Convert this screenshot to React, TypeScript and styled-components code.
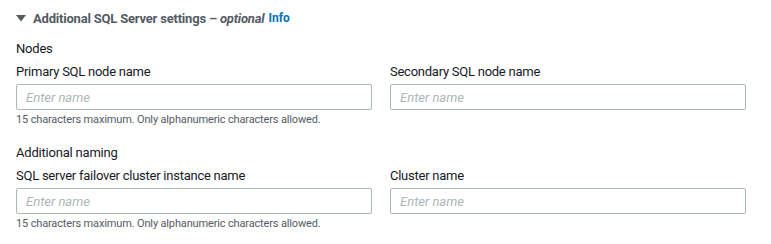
import React from 'react';
import styled, { createGlobalStyle } from 'styled-components';

const GlobalStyle = createGlobalStyle`
  body {
    margin: 0;
    background: #ffffff;
    font-family: Roboto, 'Liberation Sans', Arial, sans-serif;
    color: #16191f;
  }
`;

type Field = { label: string; help?: string };

const groups: { title: string; fields: Field[] }[] = [
  {
    title: 'Nodes',
    fields: [
      {
        label: 'Primary SQL node name',
        help: '15 characters maximum. Only alphanumeric characters allowed.',
      },
      { label: 'Secondary SQL node name' },
    ],
  },
  {
    title: 'Additional naming',
    fields: [
      {
        label: 'SQL server failover cluster instance name',
        help: '15 characters maximum. Only alphanumeric characters allowed.',
      },
      { label: 'Cluster name' },
    ],
  },
];

function App() {
  return (
    <>
      <GlobalStyle />
      <Section>
        <Header>
          <Caret viewBox="0 0 10 7" aria-hidden>
            <path d="M0 0 H10 L5 6.5 Z" fill="#545b64" />
          </Caret>
          <HeaderText>
            Additional SQL Server settings – <Optional>optional</Optional>
          </HeaderText>
          <InfoLink href="#">Info</InfoLink>
        </Header>

        {groups.map((group) => (
          <Group key={group.title}>
            <GroupTitle>{group.title}</GroupTitle>
            <Columns>
              {group.fields.map((field) => (
                <FieldBox key={field.label}>
                  <Label>{field.label}</Label>
                  <Input placeholder="Enter name" />
                  {field.help ? <Help>{field.help}</Help> : null}
                </FieldBox>
              ))}
            </Columns>
          </Group>
        ))}
      </Section>
    </>
  );
}

const Section = styled.div`
  padding: 8px 25px 0 16px;
`;

const Header = styled.div`
  display: flex;
  align-items: center;
  height: 20px;
`;

const Caret = styled.svg`
  width: 10px;
  height: 7px;
  margin-right: 7px;
  margin-top: 1px;
`;

const HeaderText = styled.span`
  font-size: 13px;
  font-weight: 700;
  letter-spacing: -0.2px;
  color: #545b64;
`;

const Optional = styled.i`
  font-weight: 700;
  color: #545b64;
`;

const InfoLink = styled.a`
  font-size: 12px;
  font-weight: 700;
  color: #0073bb;
  text-decoration: none;
  margin-left: 4px;
`;

const Group = styled.div`
  margin-top: 11px;

  & + & {
    margin-top: 15px;
  }
`;

const GroupTitle = styled.div`
  font-size: 13px;
  letter-spacing: -0.2px;
  line-height: 20px;
  color: #16191f;
  margin-bottom: 3px;
`;

const Columns = styled.div`
  display: grid;
  grid-template-columns: 1fr 1fr;
  column-gap: 18px;
`;

const FieldBox = styled.div`
  display: flex;
  flex-direction: column;
`;

const Label = styled.label`
  font-size: 13px;
  letter-spacing: -0.25px;
  line-height: 20px;
  color: #16191f;
  margin-bottom: 2px;
`;

const Input = styled.input`
  box-sizing: border-box;
  height: 26px;
  width: 100%;
  border: 1px solid #aab7b8;
  border-radius: 2px;
  padding: 0 9px;
  font-family: inherit;
  font-size: 13px;
  color: #16191f;
  outline: none;

  &::placeholder {
    color: #aab7b8;
    font-style: italic;
  }
`;

const Help = styled.div`
  font-size: 11px;
  letter-spacing: -0.15px;
  line-height: 16px;
  color: #545b64;
  margin-top: 2px;
`;

export default App;
